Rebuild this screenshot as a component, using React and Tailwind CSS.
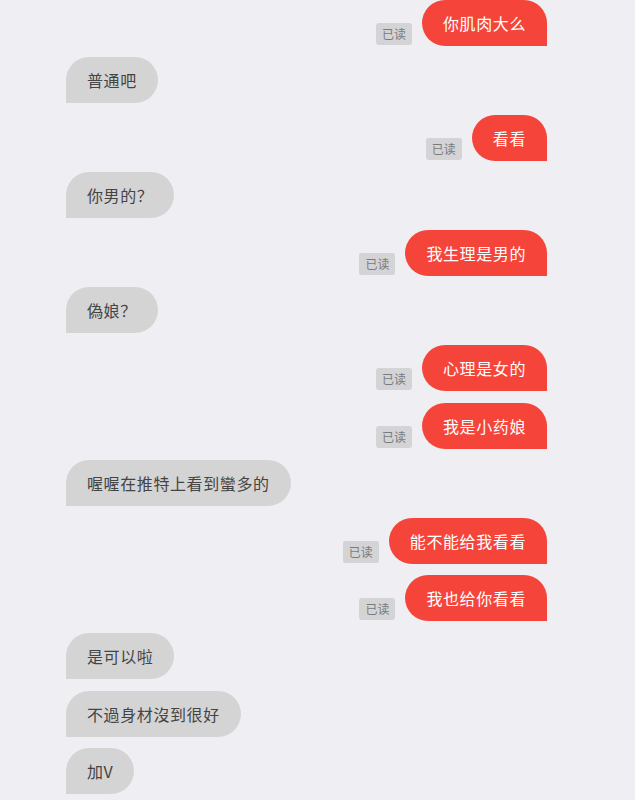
import React from 'react';

const messages = [
  { me: true, text: '你肌肉大么' },
  { me: false, text: '普通吧' },
  { me: true, text: '看看' },
  { me: false, text: '你男的？' },
  { me: true, text: '我生理是男的' },
  { me: false, text: '偽娘？' },
  { me: true, text: '心理是女的' },
  { me: true, text: '我是小药娘' },
  { me: false, text: '喔喔在推特上看到蠻多的' },
  { me: true, text: '能不能给我看看' },
  { me: true, text: '我也给你看看' },
  { me: false, text: '是可以啦' },
  { me: false, text: '不過身材沒到很好' },
  { me: false, text: '加V' },
];

const Bubble = ({ me, text }) => {
  if (me) {
    return (
      <div className="flex items-end justify-end gap-[10px]">
        <span className="h-[22px] w-[36px] mb-[1px] rounded-[3px] bg-[#d4d4d6] text-[12px] leading-[22px] text-center text-[#7a7a7a]">
          已读
        </span>
        <div className="h-[46px] px-[21px] rounded-[23px] rounded-br-none bg-[#f5453a] text-white text-[16px] tracking-[0.6px] leading-[46px]">
          {text}
        </div>
      </div>
    );
  }
  return (
    <div className="flex justify-start">
      <div className="h-[46px] px-[21px] rounded-[23px] rounded-bl-none bg-[#d4d4d4] text-[#444] text-[16px] tracking-[0.6px] leading-[46px]">
        {text}
      </div>
    </div>
  );
};

export default function App() {
  return (
    <div
      className="w-[635px] h-[800px] overflow-hidden bg-[#efeef3] pl-[66px] pr-[88px] flex flex-col gap-[11.6px] -mt-[0.5px]"
      style={{ fontFamily: '"Noto Sans CJK SC", "Noto Sans", sans-serif' }}
    >
      {messages.map((m, i) => (
        <Bubble key={i} {...m} />
      ))}
    </div>
  );
}
